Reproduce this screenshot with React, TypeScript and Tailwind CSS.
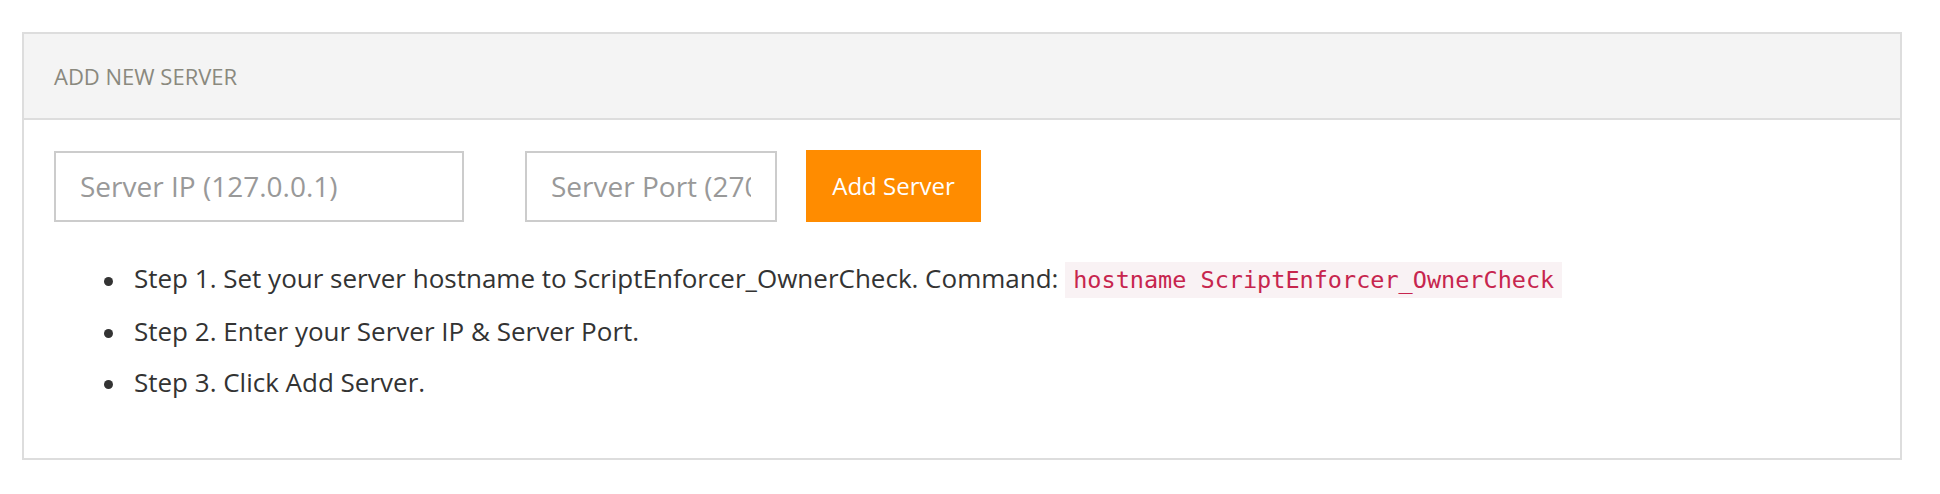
const steps = [
  <>
    Step 1. Set your server hostname to ScriptEnforcer_OwnerCheck. Command:{' '}
    <code className="bg-[#f9f2f4] px-[8px] py-[4px] font-['DejaVu_Sans_Mono',monospace] text-[23.5px] text-[#c7254e]">
      hostname ScriptEnforcer_OwnerCheck
    </code>
  </>,
  <>Step 2. Enter your Server IP &amp; Server Port.</>,
  <>Step 3. Click Add Server.</>,
]

export default function App() {
  return (
    <div className="min-h-screen bg-white pt-[32px] pl-[22px] pr-[38px] font-['Open_Sans',sans-serif] text-[#333]">
      <div className="border-2 border-[#ddd] bg-white">
        <div className="h-[86px] flex items-center border-b-2 border-[#ddd] bg-[#f4f4f4] pl-[30px]">
          <h3 className="text-[22px] uppercase text-[#8a897e]">Add New Server</h3>
        </div>
        <div className="pl-[30px] pt-[30px] pb-[50px]">
          <form className="flex items-center" onSubmit={(e) => e.preventDefault()}>
            <input
              type="text"
              placeholder="Server IP (127.0.0.1)"
              className="h-[71px] w-[410px] border-2 border-[#ccc] bg-white px-[24px] text-[28px] text-[#555] outline-none placeholder:text-[#999]"
            />
            <input
              type="text"
              placeholder="Server Port (27015)"
              className="ml-[61px] h-[71px] w-[252px] border-2 border-[#ccc] bg-white px-[24px] text-[28px] text-[#555] outline-none placeholder:text-[#999]"
            />
            <button
              type="submit"
              className="ml-[29px] h-[72px] w-[175px] bg-[#ff8c00] text-[24px] text-white"
            >
              Add Server
            </button>
          </form>
          <ul className="mt-[31px] pl-[50px] text-[26px] leading-[51px]">
            {steps.map((s, i) => (
              <li key={i} className="flex items-center">
                <span className="mt-[3px] mr-[21px] h-[9px] w-[9px] shrink-0 rounded-full bg-[#333]" />
                <span>{s}</span>
              </li>
            ))}
          </ul>
        </div>
      </div>
    </div>
  )
}
